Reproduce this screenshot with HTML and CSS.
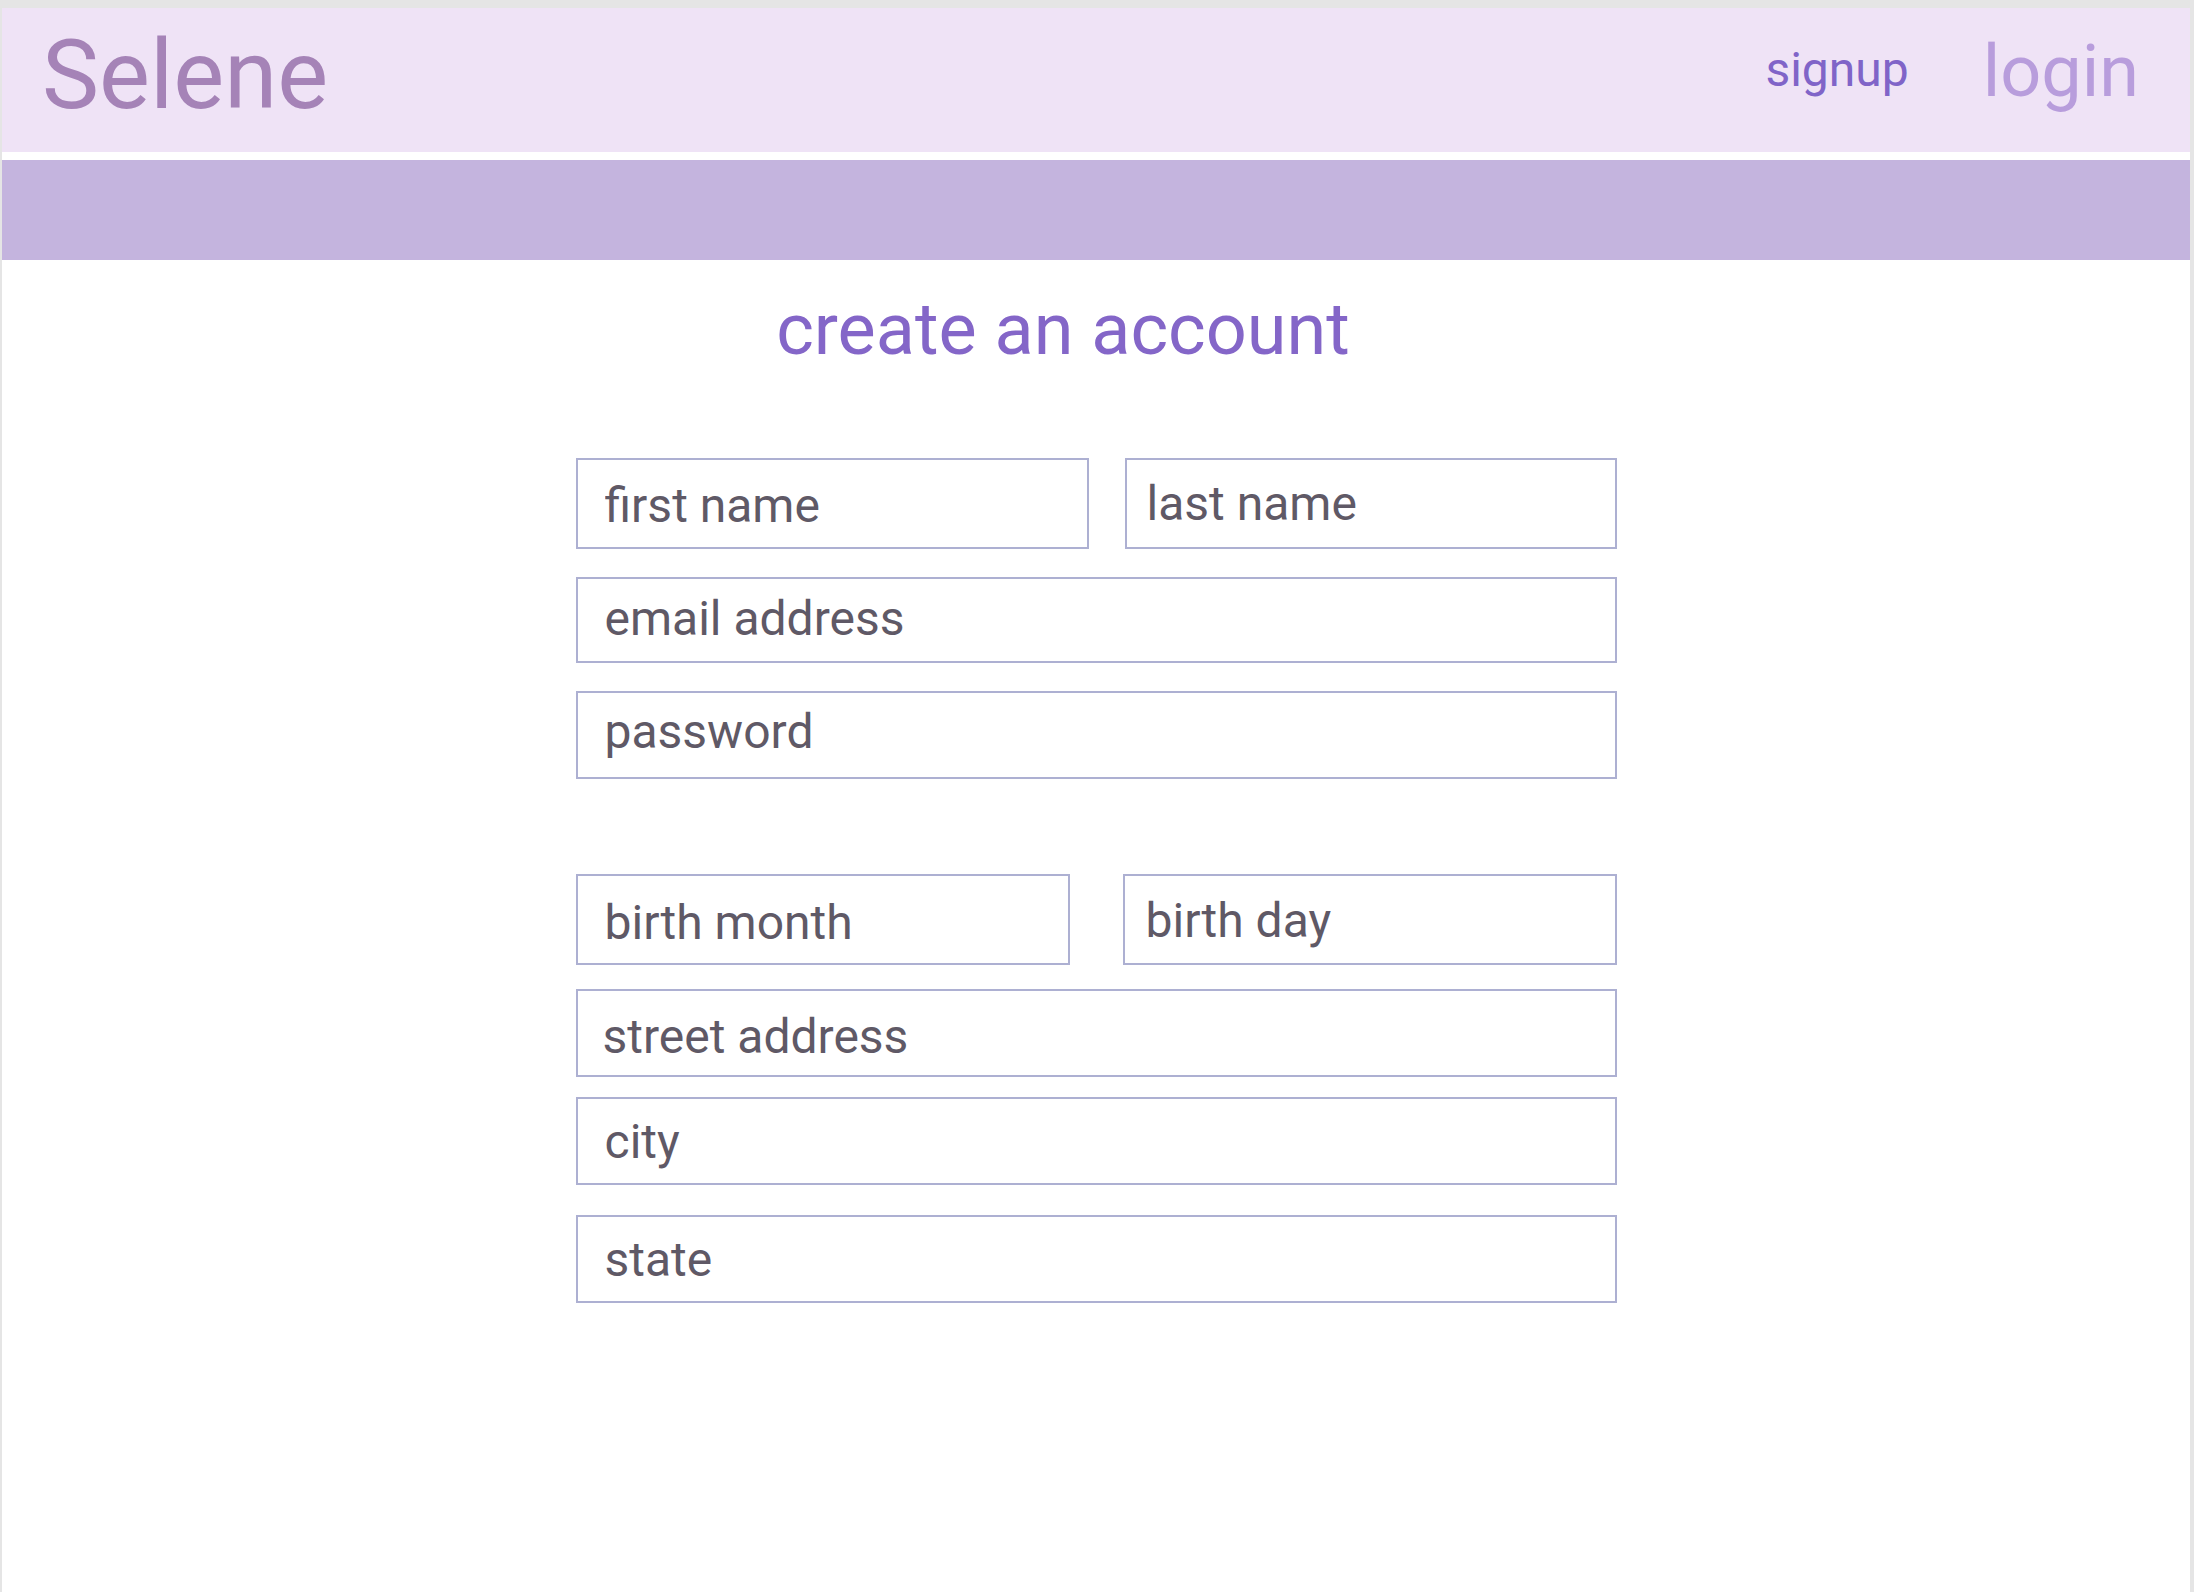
FILE: index.html
```html
<!DOCTYPE html>
<html lang="en">
<head>
<meta charset="utf-8">
<title>Selene - create an account</title>
<link rel="stylesheet" href="styles.css">
</head>
<body>
<div class="page">
  <header class="topbar">
    <div class="logo">Selene</div>
    <nav class="nav">
      <a class="nav-signup" href="#">signup</a>
      <a class="nav-login" href="#">login</a>
    </nav>
  </header>
  <div class="band"></div>
  <h1 class="title">create an account</h1>
  <form class="form">
    <div class="row row-name">
      <input class="field field-first" type="text" placeholder="first name">
      <input class="field field-last" type="text" placeholder="last name">
    </div>
    <input class="field field-email" type="email" placeholder="email address">
    <input class="field field-password" type="text" placeholder="password">
    <div class="row row-birth">
      <input class="field field-month" type="text" placeholder="birth month">
      <input class="field field-day" type="text" placeholder="birth day">
    </div>
    <input class="field field-street" type="text" placeholder="street address">
    <input class="field field-city" type="text" placeholder="city">
    <input class="field field-state" type="text" placeholder="state">
  </form>
</div>
</body>
</html>
```

FILE: styles.css
```css
html, body {
  margin: 0;
  padding: 0;
}

body {
  background: #e5e5e5;
  font-family: Roboto, "Liberation Sans", sans-serif;
}

.page {
  margin: 8px 4px 0 2px;
  min-height: 1584px;
  background: #ffffff;
  display: flex;
  flex-direction: column;
}

.topbar {
  height: 144px;
  box-sizing: border-box;
  padding: 0 51px 0 40px;
  background: #efe3f6;
  display: flex;
  justify-content: space-between;
  align-items: flex-start;
}

.logo {
  font-size: 96px;
  line-height: 1;
  padding-top: 19px;
  color: #a583b7;
}

.nav {
  display: flex;
  align-items: flex-start;
  gap: 74px;
}

.nav a {
  text-decoration: none;
  line-height: 1;
}

.nav-signup {
  font-size: 48px;
  padding-top: 38px;
  color: #8064c8;
}

.nav-login {
  font-size: 72px;
  padding-top: 28px;
  color: #b89ddc;
}

.band {
  margin-top: 8px;
  height: 100px;
  background: #c4b4de;
}

.title {
  margin: 34px 0 0;
  padding-right: 66px;
  font-size: 72px;
  font-weight: 400;
  line-height: 1;
  text-align: center;
  color: #8466c8;
}

.form {
  width: 1041px;
  margin: 92px auto 0;
  display: flex;
  flex-direction: column;
}

.row {
  display: flex;
  justify-content: space-between;
}

.field {
  box-sizing: border-box;
  display: block;
  margin: 0;
  height: 88px;
  padding: 0 0 0 27px;
  border: 2px solid #adb0d2;
  border-radius: 0;
  background: #ffffff;
  font-family: Roboto, "Liberation Sans", sans-serif;
  font-size: 48px;
  color: #5f5966;
  outline: none;
}

.field::placeholder {
  color: #5f5966;
  opacity: 1;
}

.row .field {
  height: 91px;
}

.field-first {
  width: 513px;
  padding-top: 4px;
}

.field-last {
  width: 492px;
  padding-left: 20px;
  padding-bottom: 1px;
}

.field-email {
  width: 100%;
  height: 86px;
  margin-top: 28px;
  padding-bottom: 3px;
}

.field-password {
  width: 100%;
  margin-top: 28px;
  padding-bottom: 7px;
}

.row-birth {
  margin-top: 95px;
}

.field-month {
  width: 494px;
  padding-top: 6px;
}

.field-day {
  width: 494px;
  padding-left: 21px;
  padding-top: 2px;
}

.field-street {
  width: 100%;
  margin-top: 24px;
  padding-top: 7px;
  padding-left: 25px;
}

.field-city {
  width: 100%;
  margin-top: 20px;
}

.field-state {
  width: 100%;
  margin-top: 30px;
}
```
